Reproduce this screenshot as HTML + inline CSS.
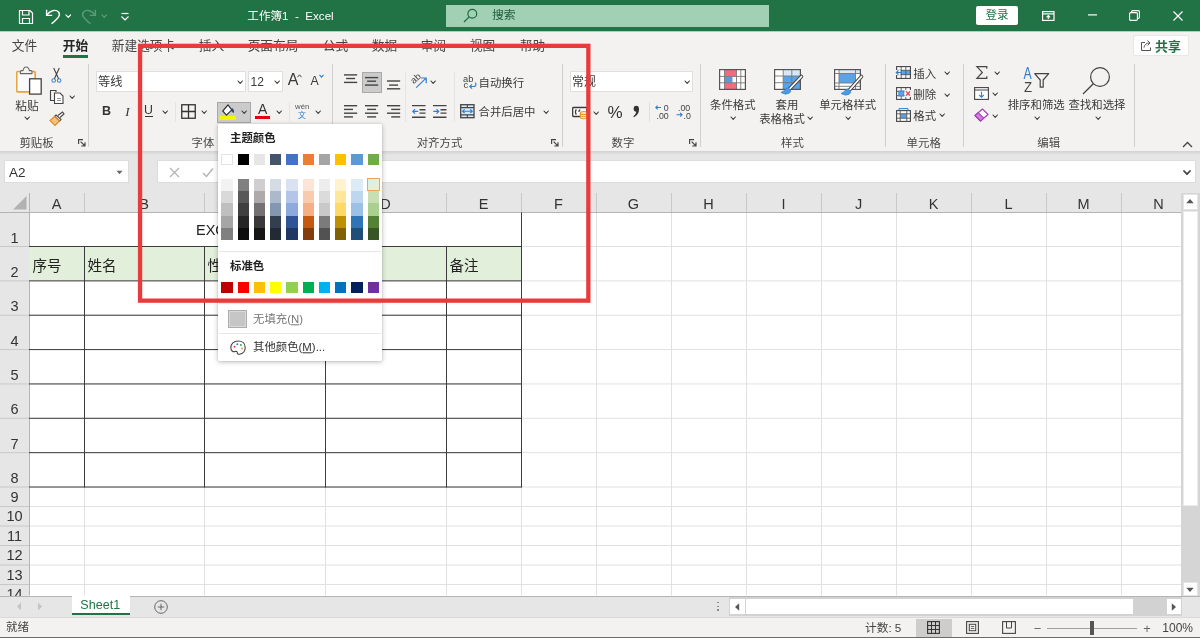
<!DOCTYPE html>
<html lang="zh-CN"><head><meta charset="utf-8"><title>Excel</title>
<style>
html,body{margin:0;padding:0;}
body{width:1200px;height:638px;overflow:hidden;background:#fff;font-family:"Liberation Sans","Noto Sans CJK SC",sans-serif;}
#root{position:relative;width:1200px;height:638px;overflow:hidden;background:#fff;will-change:transform;}
.a{position:absolute;box-sizing:border-box;}
.t{white-space:nowrap;line-height:1;}
svg{overflow:visible;}
</style></head><body><div id="root">
<div class="a " style="left:0px;top:0px;width:1200px;height:32px;background:#b4ccbe;"></div>
<div class="a " style="left:0px;top:0px;width:1200px;height:31px;background:#217346;"></div>
<svg class="a" style="left:18px;top:9px;" width="16" height="16" viewBox="0 0 16 16"><path d="M1.5 1.5 H12 L14.5 4 V14.5 H1.5 Z" fill="none" stroke="#fff" stroke-width="1.2"/><path d="M4.5 1.5 V6 H11 V1.5 M4.5 14.5 V9.5 H11.5 V14.5" fill="none" stroke="#fff" stroke-width="1.2"/></svg>
<svg class="a" style="left:45px;top:8px;" width="16" height="16" viewBox="0 0 16 16"><path d="M1.6 1.8 V7.4 H7.2" fill="none" stroke="#fff" stroke-width="1.4"/><path d="M1.8 7.2 C4.5 2.8 10.500 0.800 13.500 4 C16 7 13.500 10 6.500 15.800" fill="none" stroke="#fff" stroke-width="1.4"/></svg>
<svg class="a" style="left:65.25px;top:13.85px;" width="6.5" height="4.3" viewBox="0 0 6.5 4.3"><path d="M1 1 L3.25 3.3 L5.5 1" fill="none" stroke="#fff" stroke-width="1.2" stroke-linecap="round" stroke-linejoin="round"/></svg>
<svg class="a" style="left:81px;top:8px;" width="16" height="16" viewBox="0 0 16 16"><path d="M14.400 1.8 V7.4 H8.800" fill="none" stroke="#5d9a7a" stroke-width="1.4"/><path d="M14.200 7.2 C11.500 2.8 5.500 0.800 2.500 4 C0 7 2.500 10 9.500 15.800" fill="none" stroke="#5d9a7a" stroke-width="1.4"/></svg>
<svg class="a" style="left:100.75px;top:13.85px;" width="6.5" height="4.3" viewBox="0 0 6.5 4.3"><path d="M1 1 L3.25 3.3 L5.5 1" fill="none" stroke="#5d9a7a" stroke-width="1.2" stroke-linecap="round" stroke-linejoin="round"/></svg>
<svg class="a" style="left:119.5px;top:11.5px;" width="10" height="10" viewBox="0 0 10 10"><path d="M1.5 1.5 H8.5" stroke="#fff" stroke-width="1.2"/><path d="M1.5 4.5 L5 8 L8.5 4.5" fill="none" stroke="#fff" stroke-width="1.2"/></svg>
<div class="a t " style="left:290.5px;top:15.5px;font-size:11.6px;color:#fff;font-weight:400;transform:translate(-50%,-50%);">工作簿1&nbsp; -&nbsp; Excel</div>
<div class="a " style="left:446px;top:4.5px;width:323px;height:22px;background:#a1d0b5;"></div>
<svg class="a" style="left:463px;top:8px;" width="15" height="15" viewBox="0 0 15 15"><circle cx="9.3" cy="5.7" r="4.4" fill="none" stroke="#1e6b41" stroke-width="1.2"/><path d="M6.2 8.8 L1 14" stroke="#1e6b41" stroke-width="1.2"/></svg>
<div class="a t " style="left:492px;top:15.5px;font-size:11.8px;color:#1e5c3a;font-weight:400;transform:translate(0,-50%);">搜索</div>
<div class="a " style="left:976px;top:6px;width:42px;height:19px;background:#fff;border-radius:2px;"></div>
<div class="a t " style="left:997px;top:15.6px;font-size:11.5px;color:#217346;font-weight:400;transform:translate(-50%,-50%);">登录</div>
<svg class="a" style="left:1042px;top:10.8px;" width="12.6" height="10" viewBox="0 0 12.6 10"><rect x="0.6" y="0.6" width="11.4" height="8.8" fill="none" stroke="#fff" stroke-width="1.2"/><path d="M0.6 2.9 H12" stroke="#fff" stroke-width="1.2"/><path d="M6.3 8 V4.6 M4.500 6.300 L6.3 4.500 L8.100 6.300" fill="none" stroke="#fff" stroke-width="1.1"/></svg>
<svg class="a" style="left:1088px;top:12px;" width="9" height="6" viewBox="0 0 9 6"><path d="M0 2.900 H9" stroke="#fff" stroke-width="1.2"/></svg>
<svg class="a" style="left:1129px;top:10px;" width="11" height="11" viewBox="0 0 11 11"><rect x="0.6" y="2.6" width="7.8" height="7.8" rx="1.2" fill="none" stroke="#fff" stroke-width="1.1"/><path d="M2.6 2.4 V1.8 Q2.6 0.6 3.8 0.6 H9.2 Q10.4 0.6 10.4 1.8 V7.2 Q10.4 8.4 9.2 8.4 H8.6" fill="none" stroke="#fff" stroke-width="1.1"/></svg>
<svg class="a" style="left:1173px;top:10.8px;" width="10" height="10" viewBox="0 0 10 10"><path d="M0.5 0.5 L9.5 9.5 M9.5 0.5 L0.5 9.5" stroke="#fff" stroke-width="1.2"/></svg>
<div class="a " style="left:0px;top:32px;width:1200px;height:120px;background:#f3f2f1;"></div>
<div class="a t " style="left:24.5px;top:45.5px;font-size:12.7px;color:#444;font-weight:400;transform:translate(-50%,-50%);">文件</div>
<div class="a t " style="left:75.5px;top:45.5px;font-size:12.7px;color:#262626;font-weight:700;transform:translate(-50%,-50%);">开始</div>
<div class="a t " style="left:143.5px;top:45.5px;font-size:12.7px;color:#444;font-weight:400;transform:translate(-50%,-50%);">新建选项卡</div>
<div class="a t " style="left:211.5px;top:45.5px;font-size:12.7px;color:#444;font-weight:400;transform:translate(-50%,-50%);">插入</div>
<div class="a t " style="left:273px;top:45.5px;font-size:12.7px;color:#444;font-weight:400;transform:translate(-50%,-50%);">页面布局</div>
<div class="a t " style="left:335.5px;top:45.5px;font-size:12.7px;color:#444;font-weight:400;transform:translate(-50%,-50%);">公式</div>
<div class="a t " style="left:384.5px;top:45.5px;font-size:12.7px;color:#444;font-weight:400;transform:translate(-50%,-50%);">数据</div>
<div class="a t " style="left:433.5px;top:45.5px;font-size:12.7px;color:#444;font-weight:400;transform:translate(-50%,-50%);">审阅</div>
<div class="a t " style="left:482.5px;top:45.5px;font-size:12.7px;color:#444;font-weight:400;transform:translate(-50%,-50%);">视图</div>
<div class="a t " style="left:532.5px;top:45.5px;font-size:12.7px;color:#444;font-weight:400;transform:translate(-50%,-50%);">帮助</div>
<div class="a " style="left:63px;top:55px;width:25px;height:2.5px;background:#217346;"></div>
<div class="a " style="left:1133px;top:35px;width:56px;height:21px;background:#fdfdfd;border:1px solid #e9e7e5;border-radius:2px;"></div>
<svg class="a" style="left:1140px;top:39px;" width="13" height="13" viewBox="0 0 13 13"><path d="M5 3.5 H1.5 V11.5 H10.5 V8.5" fill="none" stroke="#555" stroke-width="1"/><path d="M4 8.5 C4.5 5.5 6.5 4 9.5 4 M7.5 1.5 L10 4 L7.5 6.5" fill="none" stroke="#555" stroke-width="1"/></svg>
<div class="a t " style="left:1155px;top:46px;font-size:13px;color:#217346;font-weight:700;transform:translate(0,-50%);">共享</div>
<svg class="a" style="left:15px;top:66px;" width="29" height="30" viewBox="0 0 29 30">
<path d="M5.500 5.600 H2.900 Q1.900 5.600 1.900 6.600 V24.900 Q1.900 25.900 2.900 25.900 H14" fill="#fbfbfd" stroke="#e8a33d" stroke-width="1.700"/>
<path d="M2.700 6.400 H19.400 V12.500 H14 V25.100 H2.700 Z" fill="#fbfbfd"/>
<path d="M17 5.600 H19.200 Q20.200 5.600 20.200 6.600 V12.200" fill="none" stroke="#e8a33d" stroke-width="1.700"/>
<path d="M5.400 7.600 V5.600 Q5.400 4.600 6.400 4.600 H8 Q8.800 1 11.200 1 Q13.600 1 14.400 4.600 H16 Q17 4.600 17 5.600 V7.600 Z" fill="#f3f2f1" stroke="#666" stroke-width="1.100" stroke-linejoin="round"/>
<rect x="14.600" y="12.800" width="11.600" height="15.300" fill="#fff" stroke="#444" stroke-width="1.300"/>
</svg>
<div class="a t " style="left:27px;top:105.8px;font-size:11.7px;color:#3a3a3a;font-weight:400;transform:translate(-50%,-50%);">粘贴</div>
<svg class="a" style="left:23.8px;top:116.3px;" width="6.4" height="4.4" viewBox="0 0 6.4 4.4"><path d="M1 1 L3.2 3.4 L5.4 1" fill="none" stroke="#3a3a3a" stroke-width="1.1" stroke-linecap="round" stroke-linejoin="round"/></svg>
<svg class="a" style="left:50px;top:66.5px;" width="13" height="17" viewBox="0 0 13 17">
<path d="M3.700 1 L8.700 11.900 M9.300 1 L4.300 11.900" stroke="#444" stroke-width="1.100" fill="none"/>
<circle cx="3.700" cy="13.500" r="1.800" fill="none" stroke="#3f87c9" stroke-width="1.100"/>
<circle cx="9.100" cy="13.500" r="1.800" fill="none" stroke="#3f87c9" stroke-width="1.100"/></svg>
<svg class="a" style="left:49px;top:89px;" width="16" height="16" viewBox="0 0 16 16">
<path d="M5 11.500 H1.5 V1.5 H7 V3" fill="none" stroke="#444" stroke-width="1.1"/>
<path d="M5.5 4 H11 L14 7 V14.5 H5.5 Z" fill="#fff" stroke="#444" stroke-width="1.1"/>
<path d="M8 9.5 H12 M8 11.500 H12" stroke="#888" stroke-width="0.9"/></svg>
<svg class="a" style="left:69.3px;top:94.8px;" width="6.4" height="4.4" viewBox="0 0 6.4 4.4"><path d="M1 1 L3.2 3.4 L5.4 1" fill="none" stroke="#3a3a3a" stroke-width="1.1" stroke-linecap="round" stroke-linejoin="round"/></svg>
<svg class="a" style="left:49px;top:111px;" width="16" height="16" viewBox="0 0 16 16">
<path d="M9 4.5 L13.500 1 L15 3 L11 6.5" fill="#fff" stroke="#444" stroke-width="1.1"/>
<path d="M7 4 L12 8.5 L10.5 10 L5.5 5.500 Z" fill="#fff" stroke="#444" stroke-width="1.1"/>
<path d="M5.500 5.500 L1 9.5 L6 14.5 L10.5 10 Z" fill="#f4c27a" stroke="#e08a2c" stroke-width="1.1"/></svg>
<div class="a t " style="left:36.5px;top:143.8px;font-size:11.41px;color:#484848;font-weight:400;transform:translate(-50%,-50%);">剪贴板</div>
<svg class="a" style="left:77.5px;top:138.9px;" width="8" height="8" viewBox="0 0 8 8"><path d="M0.6 5 V0.6 H5" fill="none" stroke="#444" stroke-width="1.15"/><path d="M2.600 2.600 L7 7 M7 3.300 V7 H3.300" fill="none" stroke="#444" stroke-width="1.15"/></svg>
<div class="a " style="left:88px;top:64px;width:1px;height:83px;background:#d2d0ce;"></div>
<div class="a " style="left:96px;top:71px;width:150px;height:21px;background:#fff;border:1px solid #e1dfdd;"></div>
<div class="a t " style="left:98px;top:82.3px;font-size:12.3px;color:#3a3a3a;font-weight:400;transform:translate(0,-50%);">等线</div>
<svg class="a" style="left:237.3px;top:79.8px;" width="6.4" height="4.4" viewBox="0 0 6.4 4.4"><path d="M1 1 L3.2 3.4 L5.4 1" fill="none" stroke="#3a3a3a" stroke-width="1.1" stroke-linecap="round" stroke-linejoin="round"/></svg>
<div class="a " style="left:248px;top:71px;width:35px;height:21px;background:#fff;border:1px solid #e1dfdd;"></div>
<div class="a t " style="left:250.5px;top:82px;font-size:12px;color:#3a3a3a;font-weight:400;transform:translate(0,-50%);">12</div>
<svg class="a" style="left:274.3px;top:79.8px;" width="6.4" height="4.4" viewBox="0 0 6.4 4.4"><path d="M1 1 L3.2 3.4 L5.4 1" fill="none" stroke="#3a3a3a" stroke-width="1.1" stroke-linecap="round" stroke-linejoin="round"/></svg>
<div class="a t " style="left:293.1px;top:80px;font-size:16px;color:#3a3a3a;font-weight:400;transform:translate(-50%,-50%);">A</div>
<svg class="a" style="left:297px;top:74px;" width="5" height="4" viewBox="0 0 5 4"><path d="M0.500 3.200 L2.5 0.800 L4.5 3.200" fill="none" stroke="#444" stroke-width="1"/></svg>
<div class="a t " style="left:314.7px;top:81.4px;font-size:12.3px;color:#3a3a3a;font-weight:400;transform:translate(-50%,-50%);">A</div>
<svg class="a" style="left:318.5px;top:74.3px;" width="5" height="4" viewBox="0 0 5 4"><path d="M0.500 0.800 L2.5 3.200 L4.5 0.800" fill="none" stroke="#2f7fd1" stroke-width="1.1"/></svg>
<div class="a t " style="left:106.4px;top:110.6px;font-size:12.5px;color:#333;font-weight:700;transform:translate(-50%,-50%);">B</div>
<div class="a t " style="left:127.5px;top:110.6px;font-size:13px;color:#333;font-weight:400;transform:translate(-50%,-50%);font-style:italic;font-family:&quot;Liberation Serif&quot;,serif;">I</div>
<div class="a t " style="left:148.4px;top:110.4px;font-size:12.3px;color:#333;font-weight:400;transform:translate(-50%,-50%);">U</div>
<div class="a " style="left:144.5px;top:116px;width:8px;height:1px;background:#333;"></div>
<svg class="a" style="left:161.8px;top:110.1px;" width="6.4" height="4.4" viewBox="0 0 6.4 4.4"><path d="M1 1 L3.2 3.4 L5.4 1" fill="none" stroke="#3a3a3a" stroke-width="1.1" stroke-linecap="round" stroke-linejoin="round"/></svg>
<div class="a " style="left:174.5px;top:102px;width:1px;height:20px;background:#e6e4e2;"></div>
<svg class="a" style="left:180.5px;top:103.7px;" width="15" height="15" viewBox="0 0 15 15"><rect x="0.750" y="0.750" width="13.500" height="13.500" fill="none" stroke="#333" stroke-width="1.3"/><path d="M7.5 0.750 V14.250 M0.750 7.5 H14.250" stroke="#333" stroke-width="1.3"/></svg>
<svg class="a" style="left:201.3px;top:110.1px;" width="6.4" height="4.4" viewBox="0 0 6.4 4.4"><path d="M1 1 L3.2 3.4 L5.4 1" fill="none" stroke="#3a3a3a" stroke-width="1.1" stroke-linecap="round" stroke-linejoin="round"/></svg>
<div class="a " style="left:217px;top:102px;width:34px;height:21px;background:#cbcbcb;border:1px solid #a9a9a9;"></div>
<svg class="a" style="left:220px;top:102.5px;" width="16" height="13" viewBox="0 0 16 13">
<path d="M8 1.800 L11.800 6.800 L6.500 12.200 L2.800 8 Z" fill="#fff" stroke="#333" stroke-width="1.200" stroke-linejoin="round"/>
<path d="M12.300 5.500 Q14 7.500 13.600 9.200 Q12.800 9.800 12.200 8.600 Z" fill="#1f3864" stroke="#1f3864" stroke-width="0.800" stroke-linejoin="round"/></svg>
<div class="a " style="left:219px;top:116px;width:17px;height:3.5px;background:#f5f500;"></div>
<svg class="a" style="left:240.8px;top:110.39999999999999px;" width="6.4" height="4.4" viewBox="0 0 6.4 4.4"><path d="M1 1 L3.2 3.4 L5.4 1" fill="none" stroke="#3a3a3a" stroke-width="1.1" stroke-linecap="round" stroke-linejoin="round"/></svg>
<div class="a t " style="left:262.7px;top:109.2px;font-size:14px;color:#333;font-weight:400;transform:translate(-50%,-50%);">A</div>
<div class="a " style="left:255px;top:116px;width:15px;height:3.3px;background:#e60012;"></div>
<svg class="a" style="left:275.8px;top:110.3px;" width="6.4" height="4.4" viewBox="0 0 6.4 4.4"><path d="M1 1 L3.2 3.4 L5.4 1" fill="none" stroke="#3a3a3a" stroke-width="1.1" stroke-linecap="round" stroke-linejoin="round"/></svg>
<div class="a " style="left:289px;top:102px;width:1px;height:20px;background:#e6e4e2;"></div>
<div class="a t " style="left:302.2px;top:107.1px;font-size:7.8px;color:#555;font-weight:400;transform:translate(-50%,-50%);">wén</div>
<div class="a t " style="left:302px;top:115.8px;font-size:8px;color:#2f7fd1;font-weight:400;transform:translate(-50%,-50%);">文</div>
<svg class="a" style="left:315.0px;top:110.3px;" width="6.4" height="4.4" viewBox="0 0 6.4 4.4"><path d="M1 1 L3.2 3.4 L5.4 1" fill="none" stroke="#3a3a3a" stroke-width="1.1" stroke-linecap="round" stroke-linejoin="round"/></svg>
<div class="a t " style="left:203px;top:143.8px;font-size:11.41px;color:#484848;font-weight:400;transform:translate(-50%,-50%);">字体</div>
<div class="a " style="left:332px;top:64px;width:1px;height:83px;background:#d2d0ce;"></div>
<svg class="a" style="left:344px;top:72px;" width="13.2" height="20" viewBox="0 0 13.2 20"><path d="M0.0 2.9 H13.2" stroke="#444" stroke-width="1.4"/><path d="M2.0999999999999996 6.5 H11.1" stroke="#444" stroke-width="1.4"/><path d="M0.0 10.4 H13.2" stroke="#444" stroke-width="1.4"/></svg>
<div class="a " style="left:362px;top:72px;width:20px;height:21px;background:#cbcbcb;border:1px solid #a9a9a9;"></div>
<svg class="a" style="left:365.1px;top:72px;" width="13.2" height="20" viewBox="0 0 13.2 20"><path d="M0.0 5.6 H13.2" stroke="#444" stroke-width="1.4"/><path d="M2.0999999999999996 9.2 H11.1" stroke="#444" stroke-width="1.4"/><path d="M0.0 13.1 H13.2" stroke="#444" stroke-width="1.4"/></svg>
<svg class="a" style="left:386.8px;top:72px;" width="13.2" height="20" viewBox="0 0 13.2 20"><path d="M0.0 9 H13.2" stroke="#444" stroke-width="1.4"/><path d="M2.0999999999999996 13.1 H11.1" stroke="#444" stroke-width="1.4"/><path d="M0.0 16.8 H13.2" stroke="#444" stroke-width="1.4"/></svg>
<div class="a " style="left:404.5px;top:72px;width:1px;height:50px;background:#e6e4e2;"></div>
<svg class="a" style="left:410px;top:72px;" width="18" height="18" viewBox="0 0 18 18">
<text x="0" y="0" font-size="9.500" fill="#444" transform="translate(3.800 12.300) rotate(-42)" font-family="Liberation Sans">ab</text>
<path d="M6.200 15.600 L15.800 6.400 M11 6 H16.200 V11.200" fill="none" stroke="#2f7fd1" stroke-width="1.200"/></svg>
<svg class="a" style="left:429.5px;top:80.2px;" width="6.4" height="4.4" viewBox="0 0 6.4 4.4"><path d="M1 1 L3.2 3.4 L5.4 1" fill="none" stroke="#3a3a3a" stroke-width="1.1" stroke-linecap="round" stroke-linejoin="round"/></svg>
<div class="a " style="left:453.5px;top:72px;width:1px;height:50px;background:#e6e4e2;"></div>
<svg class="a" style="left:463px;top:75px;" width="14" height="14" viewBox="0 0 14 14">
<text x="0" y="6.500" font-size="9.300" fill="#444" font-family="Liberation Sans">ab</text>
<text x="0.500" y="13" font-size="9.300" fill="#444" font-family="Liberation Sans">c</text>
<path d="M12.200 7.600 Q13.600 9 12.600 10.600 Q12 11.500 10.500 11.500 H7 M9 9.300 L6.800 11.500 L9 13.700" fill="none" stroke="#2f7fd1" stroke-width="1.200"/></svg>
<div class="a t " style="left:478.5px;top:83.8px;font-size:11.41px;color:#3a3a3a;font-weight:400;transform:translate(0,-50%);">自动换行</div>
<svg class="a" style="left:344px;top:103px;" width="13.2" height="16" viewBox="0 0 13.2 16"><path d="M0 2.7 H13.2" stroke="#444" stroke-width="1.4"/><path d="M0 6.4 H9" stroke="#444" stroke-width="1.4"/><path d="M0 10.2 H13.2" stroke="#444" stroke-width="1.4"/><path d="M0 13.9 H9" stroke="#444" stroke-width="1.4"/></svg>
<svg class="a" style="left:365.1px;top:103px;" width="13.2" height="16" viewBox="0 0 13.2 16"><path d="M0.0 2.7 H13.2" stroke="#444" stroke-width="1.4"/><path d="M2.0999999999999996 6.4 H11.1" stroke="#444" stroke-width="1.4"/><path d="M0.0 10.2 H13.2" stroke="#444" stroke-width="1.4"/><path d="M2.0999999999999996 13.9 H11.1" stroke="#444" stroke-width="1.4"/></svg>
<svg class="a" style="left:386.8px;top:103px;" width="13.2" height="16" viewBox="0 0 13.2 16"><path d="M0.0 2.7 H13.2" stroke="#444" stroke-width="1.4"/><path d="M4.199999999999999 6.4 H13.2" stroke="#444" stroke-width="1.4"/><path d="M0.0 10.2 H13.2" stroke="#444" stroke-width="1.4"/><path d="M4.199999999999999 13.9 H13.2" stroke="#444" stroke-width="1.4"/></svg>
<svg class="a" style="left:412px;top:103px;" width="14" height="16" viewBox="0 0 14 16">
<path d="M0 2.6 H13.5 M7.5 6.700 H13.5 M7.5 10.100 H13.5 M0 14.200 H13.5" stroke="#444" stroke-width="1.400"/>
<path d="M6.200 8.400 H0.800 M3 6.200 L0.800 8.400 L3 10.600" fill="none" stroke="#2f7fd1" stroke-width="1.200"/></svg>
<svg class="a" style="left:433.3px;top:103px;" width="14" height="16" viewBox="0 0 14 16">
<path d="M0 2.6 H13.5 M7.5 6.700 H13.5 M7.5 10.100 H13.5 M0 14.200 H13.5" stroke="#444" stroke-width="1.400"/>
<path d="M0.300 8.400 H5.700 M3.500 6.200 L5.700 8.400 L3.500 10.600" fill="none" stroke="#2f7fd1" stroke-width="1.200"/></svg>
<svg class="a" style="left:460.4px;top:104px;" width="15" height="15" viewBox="0 0 15 15">
<rect x="0.700" y="0.700" width="13.300" height="13" fill="#dbeaf8" stroke="#444" stroke-width="1.300"/>
<path d="M0.700 3.600 H14 M0.700 10.900 H14 M7.300 0.700 V3.600 M7.300 10.900 V13.700" stroke="#444" stroke-width="1.100"/>
<path d="M2.600 7.250 H12.200 M4.600 5.400 L2.600 7.250 L4.600 9.100 M10.200 5.400 L12.200 7.250 L10.200 9.100" fill="none" stroke="#2f7fd1" stroke-width="1.200"/></svg>
<div class="a t " style="left:478.5px;top:113.3px;font-size:11.41px;color:#3a3a3a;font-weight:400;transform:translate(0,-50%);">合并后居中</div>
<svg class="a" style="left:543.3px;top:110.3px;" width="6.4" height="4.4" viewBox="0 0 6.4 4.4"><path d="M1 1 L3.2 3.4 L5.4 1" fill="none" stroke="#3a3a3a" stroke-width="1.1" stroke-linecap="round" stroke-linejoin="round"/></svg>
<div class="a t " style="left:439.5px;top:143.8px;font-size:11.41px;color:#484848;font-weight:400;transform:translate(-50%,-50%);">对齐方式</div>
<svg class="a" style="left:551px;top:138.9px;" width="8" height="8" viewBox="0 0 8 8"><path d="M0.6 5 V0.6 H5" fill="none" stroke="#444" stroke-width="1.15"/><path d="M2.600 2.600 L7 7 M7 3.300 V7 H3.300" fill="none" stroke="#444" stroke-width="1.15"/></svg>
<div class="a " style="left:562px;top:64px;width:1px;height:83px;background:#d2d0ce;"></div>
<div class="a " style="left:570px;top:71px;width:123px;height:21px;background:#fff;border:1px solid #e1dfdd;"></div>
<div class="a t " style="left:572px;top:82.3px;font-size:12px;color:#3a3a3a;font-weight:400;transform:translate(0,-50%);">常规</div>
<svg class="a" style="left:684.3px;top:79.8px;" width="6.4" height="4.4" viewBox="0 0 6.4 4.4"><path d="M1 1 L3.2 3.4 L5.4 1" fill="none" stroke="#3a3a3a" stroke-width="1.1" stroke-linecap="round" stroke-linejoin="round"/></svg>
<svg class="a" style="left:572px;top:104px;" width="17" height="15" viewBox="0 0 17 15">
<rect x="0.700" y="3.500" width="14" height="9" rx="0.800" fill="#fff" stroke="#3a3a3a" stroke-width="1.300"/>
<path d="M4.300 5.300 Q2.500 8 4.300 10.700 M8.300 5.600 Q6.800 6.300 6.900 8" fill="none" stroke="#3a3a3a" stroke-width="1.200"/>
<path d="M8.300 9 V13.300 Q8.300 14.700 11.800 14.700 Q15.300 14.700 15.300 13.300 V9" fill="#fde8b8" stroke="#e39a2d" stroke-width="1.100"/>
<ellipse cx="11.800" cy="9" rx="3.500" ry="1.500" fill="#fde8b8" stroke="#e39a2d" stroke-width="1.100"/>
<path d="M8.300 11.200 Q8.300 12.600 11.800 12.600 Q15.300 12.600 15.300 11.200" fill="none" stroke="#e39a2d" stroke-width="0.900"/></svg>
<svg class="a" style="left:593.0999999999999px;top:110.7px;" width="6.4" height="4.4" viewBox="0 0 6.4 4.4"><path d="M1 1 L3.2 3.4 L5.4 1" fill="none" stroke="#3a3a3a" stroke-width="1.1" stroke-linecap="round" stroke-linejoin="round"/></svg>
<div class="a t " style="left:615px;top:111.5px;font-size:17px;color:#333;font-weight:400;transform:translate(-50%,-50%);">%</div>
<div class="a t " style="left:636.5px;top:107px;font-size:1px;color:#333;font-weight:400;transform:translate(-50%,-50%);display:none;">❟</div>
<svg class="a" style="left:631px;top:103.5px;" width="9" height="14" viewBox="0 0 9 14"><path transform="scale(1.15)" d="M4.500 1.500 Q7 1.500 7 4.500 Q7 9 2.500 11.500 L2 10.800 Q4.500 9 4.600 6.800 Q2.300 6.800 2.300 4.200 Q2.300 1.500 4.500 1.500 Z" fill="#333"/></svg>
<div class="a " style="left:648.5px;top:102px;width:1px;height:20px;background:#e1dfdd;"></div>
<svg class="a" style="left:654.5px;top:103.5px;" width="15" height="15" viewBox="0 0 15 15">
<path d="M6 3.500 H0.800 M2.600 1.700 L0.800 3.500 L2.600 5.300" fill="none" stroke="#2f7fd1" stroke-width="1.1"/>
<text x="8.800" y="7" font-size="8.800" fill="#444" font-family="Liberation Sans">0</text>
<text x="1.500" y="14.800" font-size="8.800" fill="#444" font-family="Liberation Sans">.00</text></svg>
<svg class="a" style="left:676px;top:103.5px;" width="15" height="15" viewBox="0 0 15 15">
<text x="2" y="7" font-size="8.800" fill="#444" font-family="Liberation Sans">.00</text>
<path d="M0.500 10.800 H6 M4.200 9 L6 10.800 L4.200 12.600" fill="none" stroke="#2f7fd1" stroke-width="1.1"/>
<text x="7.500" y="14.800" font-size="8.800" fill="#444" font-family="Liberation Sans">.0</text></svg>
<div class="a t " style="left:623px;top:143.8px;font-size:11.41px;color:#484848;font-weight:400;transform:translate(-50%,-50%);">数字</div>
<svg class="a" style="left:689px;top:138.9px;" width="8" height="8" viewBox="0 0 8 8"><path d="M0.6 5 V0.6 H5" fill="none" stroke="#444" stroke-width="1.15"/><path d="M2.600 2.600 L7 7 M7 3.300 V7 H3.300" fill="none" stroke="#444" stroke-width="1.15"/></svg>
<div class="a " style="left:700px;top:64px;width:1px;height:83px;background:#d2d0ce;"></div>
<svg class="a" style="left:719px;top:69px;" width="27" height="21" viewBox="0 0 27 21">
<rect x="0.600" y="0.600" width="25.800" height="19.800" fill="#fff"/>
<rect x="5.500" y="0.600" width="11.500" height="6.800" fill="#f26b7f"/>
<rect x="5.500" y="7.400" width="8" height="6.400" fill="#5b9bd5"/>
<rect x="5.500" y="13.800" width="12.500" height="6.600" fill="#f26b7f"/>
<path d="M5.500 0.600 V20.400 M17.500 0.600 V20.400 M21.800 0.600 V20.400 M0.600 7.400 H26.400 M0.600 13.800 H26.400" stroke="#777" stroke-width="0.900" fill="none"/>
<path d="M13.500 7.400 H17.500 V13.800" stroke="#fff" stroke-width="0" fill="none"/>
<rect x="0.600" y="0.600" width="25.800" height="19.800" fill="none" stroke="#555" stroke-width="1.200"/></svg>
<div class="a t " style="left:732.8px;top:105.8px;font-size:11.41px;color:#3a3a3a;font-weight:400;transform:translate(-50%,-50%);">条件格式</div>
<svg class="a" style="left:729.8px;top:116.3px;" width="6.4" height="4.4" viewBox="0 0 6.4 4.4"><path d="M1 1 L3.2 3.4 L5.4 1" fill="none" stroke="#3a3a3a" stroke-width="1.1" stroke-linecap="round" stroke-linejoin="round"/></svg>
<svg class="a" style="left:774px;top:69px;" width="30" height="26" viewBox="0 0 30 26">
<rect x="0.600" y="0.600" width="25.800" height="19.800" fill="#fff"/>
<rect x="9.200" y="7" width="17.200" height="13.400" fill="#5ba3e6"/>
<rect x="9.200" y="0.600" width="17.200" height="6.400" fill="#d6e8f9"/>
<path d="M9.200 0.600 V20.400 M17.800 0.600 V20.400 M0.600 7 H26.400 M0.600 13.700 H26.400" stroke="#777" stroke-width="0.900" fill="none"/>
<rect x="0.600" y="0.600" width="25.800" height="19.800" fill="none" stroke="#555" stroke-width="1.200"/>
<path d="M27.5 7.5 L15.5 20" stroke="#444" stroke-width="3.600" stroke-linecap="round"/><path d="M27.5 7.5 L15.5 20" stroke="#fff" stroke-width="1.800" stroke-linecap="round"/><path d="M16.0 20.5 q-1.500 -3 -4.500 -0.500 q-1.500 2.500 -4.500 3.500 q5 3 8.500 0.500 q2 -1.500 0.500 -3.500 Z" fill="#4a9be0" stroke="#2f7fd1" stroke-width="0.700"/></svg>
<div class="a t " style="left:787px;top:105.8px;font-size:11.41px;color:#3a3a3a;font-weight:400;transform:translate(-50%,-50%);">套用</div>
<div class="a t " style="left:782px;top:119.8px;font-size:11.41px;color:#3a3a3a;font-weight:400;transform:translate(-50%,-50%);">表格格式</div>
<svg class="a" style="left:807.3px;top:115.8px;" width="6.4" height="4.4" viewBox="0 0 6.4 4.4"><path d="M1 1 L3.2 3.4 L5.4 1" fill="none" stroke="#3a3a3a" stroke-width="1.1" stroke-linecap="round" stroke-linejoin="round"/></svg>
<svg class="a" style="left:834px;top:69px;" width="30" height="26" viewBox="0 0 30 26">
<rect x="0.600" y="0.600" width="25.800" height="19.800" fill="#fff"/>
<rect x="5" y="1" width="21.400" height="3.500" fill="#d6e8f9"/>
<rect x="5" y="4.500" width="16.500" height="9.500" fill="#5ba3e6"/>
<path d="M5 0.600 V20.400 M21.500 0.600 V20.400 M0.600 4.500 H26.400 M0.600 14 H26.400 M0.600 17.300 H26.400" stroke="#777" stroke-width="0.900" fill="none"/>
<rect x="0.600" y="0.600" width="25.800" height="19.800" fill="none" stroke="#555" stroke-width="1.200"/>
<path d="M27.5 7.5 L15.5 21" stroke="#444" stroke-width="3.600" stroke-linecap="round"/><path d="M27.5 7.5 L15.5 21" stroke="#fff" stroke-width="1.800" stroke-linecap="round"/><path d="M16.0 21.5 q-1.500 -3 -4.500 -0.500 q-1.500 2.500 -4.500 3.500 q5 3 8.500 0.500 q2 -1.500 0.500 -3.500 Z" fill="#4a9be0" stroke="#2f7fd1" stroke-width="0.700"/></svg>
<div class="a t " style="left:847.7px;top:105.8px;font-size:11.41px;color:#3a3a3a;font-weight:400;transform:translate(-50%,-50%);">单元格样式</div>
<svg class="a" style="left:845.3px;top:116.3px;" width="6.4" height="4.4" viewBox="0 0 6.4 4.4"><path d="M1 1 L3.2 3.4 L5.4 1" fill="none" stroke="#3a3a3a" stroke-width="1.1" stroke-linecap="round" stroke-linejoin="round"/></svg>
<div class="a t " style="left:792.5px;top:143.8px;font-size:11.41px;color:#484848;font-weight:400;transform:translate(-50%,-50%);">样式</div>
<div class="a " style="left:885px;top:64px;width:1px;height:83px;background:#d2d0ce;"></div>
<svg class="a" style="left:896px;top:66px;" width="15" height="13" viewBox="0 0 15 13">
<rect x="0.600" y="0.600" width="13.800" height="11.800" fill="#fff"/>
<rect x="0.600" y="4.300" width="13.800" height="4.400" fill="#5ba3e6"/>
<path d="M5.200 0.600 V12.400 M9.800 0.600 V12.400 M0.600 4.300 H14.400 M0.600 8.700 H14.400" stroke="#555" stroke-width="0.900"/>
<rect x="0.600" y="0.600" width="13.800" height="11.800" fill="none" stroke="#444" stroke-width="1.100"/>
<rect x="-0.500" y="4" width="5" height="5" fill="#f3f2f1"/>
<path d="M6 6.500 H0.300 M2.500 4.300 L0.300 6.500 L2.500 8.700" fill="none" stroke="#2f7fd1" stroke-width="1.200"/></svg>
<div class="a t " style="left:913.3px;top:74.6px;font-size:11.41px;color:#3a3a3a;font-weight:400;transform:translate(0,-50%);">插入</div>
<svg class="a" style="left:944.3px;top:71.3px;" width="6.4" height="4.4" viewBox="0 0 6.4 4.4"><path d="M1 1 L3.2 3.4 L5.4 1" fill="none" stroke="#3a3a3a" stroke-width="1.1" stroke-linecap="round" stroke-linejoin="round"/></svg>
<svg class="a" style="left:896px;top:87.3px;" width="15" height="13" viewBox="0 0 15 13">
<rect x="0.600" y="0.600" width="13.800" height="11.800" fill="#fff"/>
<path d="M5.200 0.600 V12.400 M9.800 0.600 V12.400 M0.600 4.300 H14.400 M0.600 8.700 H14.400" stroke="#555" stroke-width="0.900"/>
<rect x="0.600" y="0.600" width="13.800" height="11.800" fill="none" stroke="#444" stroke-width="1.100"/>
<rect x="8.500" y="3" width="7" height="7" fill="#f3f2f1"/>
<rect x="2.800" y="4" width="5" height="5" fill="#5ba3e6" stroke="#2f7fd1" stroke-width="0.800"/>
<path d="M10 4.300 L14 8.700 M14 4.300 L10 8.700" stroke="#e8394a" stroke-width="1.200"/></svg>
<div class="a t " style="left:913.3px;top:95.8px;font-size:11.41px;color:#3a3a3a;font-weight:400;transform:translate(0,-50%);">删除</div>
<svg class="a" style="left:944.3px;top:92.6px;" width="6.4" height="4.4" viewBox="0 0 6.4 4.4"><path d="M1 1 L3.2 3.4 L5.4 1" fill="none" stroke="#3a3a3a" stroke-width="1.1" stroke-linecap="round" stroke-linejoin="round"/></svg>
<svg class="a" style="left:896px;top:108.3px;" width="15" height="14" viewBox="0 0 15 14">
<rect x="0.600" y="2.600" width="13.800" height="10.800" fill="#fff"/>
<rect x="4.200" y="5.800" width="6.600" height="4.400" fill="#5ba3e6"/>
<path d="M4.200 2.600 V13.400 M10.800 2.600 V13.400 M0.600 5.800 H14.400 M0.600 10.200 H14.400" stroke="#555" stroke-width="0.900"/>
<rect x="0.600" y="2.600" width="13.800" height="10.800" fill="none" stroke="#444" stroke-width="1.100"/>
<path d="M3 2.600 V0.600 H12 V2.600" fill="none" stroke="#2f7fd1" stroke-width="1"/></svg>
<div class="a t " style="left:913.3px;top:116.6px;font-size:11.41px;color:#3a3a3a;font-weight:400;transform:translate(0,-50%);">格式</div>
<svg class="a" style="left:938.8px;top:113.3px;" width="6.4" height="4.4" viewBox="0 0 6.4 4.4"><path d="M1 1 L3.2 3.4 L5.4 1" fill="none" stroke="#3a3a3a" stroke-width="1.1" stroke-linecap="round" stroke-linejoin="round"/></svg>
<div class="a t " style="left:923.7px;top:143.8px;font-size:11.41px;color:#484848;font-weight:400;transform:translate(-50%,-50%);">单元格</div>
<div class="a " style="left:963px;top:64px;width:1px;height:83px;background:#d2d0ce;"></div>
<svg class="a" style="left:975.5px;top:66px;" width="12" height="13" viewBox="0 0 12 13"><path d="M10.800 2.800 V0.700 H0.900 L6.300 6.400 L0.900 12.300 H10.800 V10.200" fill="none" stroke="#444" stroke-width="1.200"/></svg>
<svg class="a" style="left:994.3px;top:71.3px;" width="6.4" height="4.4" viewBox="0 0 6.4 4.4"><path d="M1 1 L3.2 3.4 L5.4 1" fill="none" stroke="#3a3a3a" stroke-width="1.1" stroke-linecap="round" stroke-linejoin="round"/></svg>
<svg class="a" style="left:974px;top:87.3px;" width="15" height="13" viewBox="0 0 15 13">
<rect x="0.600" y="0.600" width="13.800" height="11.800" fill="#fff" stroke="#444" stroke-width="1.100"/>
<path d="M0.600 3 H14.400" stroke="#444" stroke-width="1"/>
<path d="M7.500 4.800 V10.300 M5.200 8 L7.500 10.300 L9.800 8" fill="none" stroke="#2f7fd1" stroke-width="1.100"/></svg>
<svg class="a" style="left:992.0px;top:92.3px;" width="6.4" height="4.4" viewBox="0 0 6.4 4.4"><path d="M1 1 L3.2 3.4 L5.4 1" fill="none" stroke="#3a3a3a" stroke-width="1.1" stroke-linecap="round" stroke-linejoin="round"/></svg>
<svg class="a" style="left:974px;top:107.8px;" width="15" height="14" viewBox="0 0 15 14">
<path d="M8.500 1 L14 6.500 L6.500 13 L1 7.500 Z" fill="#fff" stroke="#a43fb5" stroke-width="1.100" stroke-linejoin="round"/>
<path d="M4.200 4.700 L9.700 10.200 L6.500 13 L1 7.500 Z" fill="#d77be0" stroke="#a43fb5" stroke-width="1.100" stroke-linejoin="round"/></svg>
<svg class="a" style="left:992.0px;top:113.6px;" width="6.4" height="4.4" viewBox="0 0 6.4 4.4"><path d="M1 1 L3.2 3.4 L5.4 1" fill="none" stroke="#3a3a3a" stroke-width="1.1" stroke-linecap="round" stroke-linejoin="round"/></svg>
<svg class="a" style="left:1023px;top:66px;" width="10" height="27" viewBox="0 0 10 27">
<text x="0" y="0" font-size="12.3" fill="#2f7fd1" font-family="Liberation Sans" transform="translate(0.600 12.800) scale(1 1.280)">A</text>
<text x="0" y="0" font-size="12.3" fill="#444" font-family="Liberation Sans" transform="translate(0.900 25.600) scale(1.080 1.220)">Z</text></svg>
<svg class="a" style="left:1034px;top:73px;" width="16" height="16" viewBox="0 0 16 16"><path d="M0.700 0.700 H14.700 L9.200 7 V14.200 H6.200 V7 Z" fill="none" stroke="#444" stroke-width="1.200" stroke-linejoin="round"/></svg>
<div class="a t " style="left:1036.2px;top:105.8px;font-size:11.41px;color:#3a3a3a;font-weight:400;transform:translate(-50%,-50%);">排序和筛选</div>
<svg class="a" style="left:1034.3px;top:116.3px;" width="6.4" height="4.4" viewBox="0 0 6.4 4.4"><path d="M1 1 L3.2 3.4 L5.4 1" fill="none" stroke="#3a3a3a" stroke-width="1.1" stroke-linecap="round" stroke-linejoin="round"/></svg>
<svg class="a" style="left:1082px;top:66px;" width="30" height="30" viewBox="0 0 30 30"><circle cx="18" cy="11" r="9.400" fill="none" stroke="#444" stroke-width="1.200"/><path d="M11.300 17.700 L1 28" stroke="#444" stroke-width="1.300"/></svg>
<div class="a t " style="left:1097px;top:105.8px;font-size:11.41px;color:#3a3a3a;font-weight:400;transform:translate(-50%,-50%);">查找和选择</div>
<svg class="a" style="left:1094.8px;top:116.3px;" width="6.4" height="4.4" viewBox="0 0 6.4 4.4"><path d="M1 1 L3.2 3.4 L5.4 1" fill="none" stroke="#3a3a3a" stroke-width="1.1" stroke-linecap="round" stroke-linejoin="round"/></svg>
<div class="a t " style="left:1048.7px;top:143.8px;font-size:11.41px;color:#484848;font-weight:400;transform:translate(-50%,-50%);">编辑</div>
<div class="a " style="left:1134px;top:64px;width:1px;height:83px;background:#d2d0ce;"></div>
<svg class="a" style="left:1182px;top:141px;" width="11" height="7" viewBox="0 0 11 7"><path d="M1 6 L5.500 1.500 L10 6" fill="none" stroke="#444" stroke-width="1.300"/></svg>
<div class="a " style="left:0px;top:151px;width:1200px;height:61px;background:#e6e6e6;"></div>
<div class="a" style="left:0;top:151px;width:1200px;height:4px;background:linear-gradient(#d2d2d2,#e6e6e6);"></div>
<div class="a " style="left:4px;top:160px;width:124.5px;height:23px;background:#fff;border:1px solid #dcdcdc;"></div>
<div class="a t " style="left:9px;top:172.5px;font-size:13.5px;color:#333;font-weight:400;transform:translate(0,-50%);">A2</div>
<svg class="a" style="left:116px;top:170px;" width="7" height="5" viewBox="0 0 7 5"><path d="M0.500 0.800 H6.500 L3.500 4.200 Z" fill="#666"/></svg>
<div class="a " style="left:140px;top:165.5px;width:1.5px;height:1.5px;background:#999;"></div>
<div class="a " style="left:140px;top:170.5px;width:1.5px;height:1.5px;background:#999;"></div>
<div class="a " style="left:140px;top:175.5px;width:1.5px;height:1.5px;background:#999;"></div>
<div class="a " style="left:157px;top:160px;width:1038.5px;height:23px;background:#fff;border:1px solid #dcdcdc;"></div>
<svg class="a" style="left:168.5px;top:166.5px;" width="11" height="11" viewBox="0 0 11 11"><path d="M1 1 L10 10 M10 1 L1 10" stroke="#b5b5b5" stroke-width="1.300"/></svg>
<svg class="a" style="left:202px;top:166.5px;" width="12" height="11" viewBox="0 0 12 11"><path d="M1 6 L4.500 9.500 L11 1.500" fill="none" stroke="#b5b5b5" stroke-width="1.500"/></svg>
<div class="a t " style="left:241px;top:172.5px;font-size:13px;color:#666;font-weight:400;transform:translate(-50%,-50%);font-style:italic;font-family:&quot;Liberation Serif&quot;,serif;">fx</div>
<svg class="a" style="left:1183.4px;top:169.70000000000002px;" width="8" height="5.2" viewBox="0 0 8 5.2"><path d="M1 1 L4.0 4.2 L7 1" fill="none" stroke="#444" stroke-width="1.8" stroke-linecap="round" stroke-linejoin="round"/></svg>
<div class="a " style="left:0px;top:192px;width:1181px;height:20px;background:#e6e6e6;"></div>
<div class="a " style="left:0px;top:212px;width:29px;height:383.5px;background:#e6e6e6;"></div>
<div class="a " style="left:29px;top:212px;width:1152px;height:383.5px;background:#fff;"></div>
<svg class="a" style="left:0px;top:0px;pointer-events:none;" width="1181" height="595.5" viewBox="0 0 1181 595.5"><path d="M84.5 212 V595.5" stroke="#e1e1e1" stroke-width="1"/><path d="M204.5 212 V595.5" stroke="#e1e1e1" stroke-width="1"/><path d="M325.5 212 V595.5" stroke="#e1e1e1" stroke-width="1"/><path d="M446.5 212 V595.5" stroke="#e1e1e1" stroke-width="1"/><path d="M521.5 212 V595.5" stroke="#e1e1e1" stroke-width="1"/><path d="M596.5 212 V595.5" stroke="#e1e1e1" stroke-width="1"/><path d="M671.5 212 V595.5" stroke="#e1e1e1" stroke-width="1"/><path d="M746.5 212 V595.5" stroke="#e1e1e1" stroke-width="1"/><path d="M821.5 212 V595.5" stroke="#e1e1e1" stroke-width="1"/><path d="M896.5 212 V595.5" stroke="#e1e1e1" stroke-width="1"/><path d="M971.5 212 V595.5" stroke="#e1e1e1" stroke-width="1"/><path d="M1046.5 212 V595.5" stroke="#e1e1e1" stroke-width="1"/><path d="M1121.5 212 V595.5" stroke="#e1e1e1" stroke-width="1"/><path d="M29 246.5 H1181" stroke="#e1e1e1" stroke-width="1"/><path d="M29 280.86 H1181" stroke="#e1e1e1" stroke-width="1"/><path d="M29 315.22 H1181" stroke="#e1e1e1" stroke-width="1"/><path d="M29 349.58 H1181" stroke="#e1e1e1" stroke-width="1"/><path d="M29 383.94 H1181" stroke="#e1e1e1" stroke-width="1"/><path d="M29 418.3 H1181" stroke="#e1e1e1" stroke-width="1"/><path d="M29 452.66 H1181" stroke="#e1e1e1" stroke-width="1"/><path d="M29 487.02 H1181" stroke="#e1e1e1" stroke-width="1"/><path d="M29 506.52 H1181" stroke="#e1e1e1" stroke-width="1"/><path d="M29 526.02 H1181" stroke="#e1e1e1" stroke-width="1"/><path d="M29 545.52 H1181" stroke="#e1e1e1" stroke-width="1"/><path d="M29 565.02 H1181" stroke="#e1e1e1" stroke-width="1"/><path d="M29 584.52 H1181" stroke="#e1e1e1" stroke-width="1"/><path d="M84.5 193 V212" stroke="#c8c8c8" stroke-width="1"/><path d="M204.5 193 V212" stroke="#c8c8c8" stroke-width="1"/><path d="M325.5 193 V212" stroke="#c8c8c8" stroke-width="1"/><path d="M446.5 193 V212" stroke="#c8c8c8" stroke-width="1"/><path d="M521.5 193 V212" stroke="#c8c8c8" stroke-width="1"/><path d="M596.5 193 V212" stroke="#c8c8c8" stroke-width="1"/><path d="M671.5 193 V212" stroke="#c8c8c8" stroke-width="1"/><path d="M746.5 193 V212" stroke="#c8c8c8" stroke-width="1"/><path d="M821.5 193 V212" stroke="#c8c8c8" stroke-width="1"/><path d="M896.5 193 V212" stroke="#c8c8c8" stroke-width="1"/><path d="M971.5 193 V212" stroke="#c8c8c8" stroke-width="1"/><path d="M1046.5 193 V212" stroke="#c8c8c8" stroke-width="1"/><path d="M1121.5 193 V212" stroke="#c8c8c8" stroke-width="1"/><path d="M0 246.5 H29" stroke="#c8c8c8" stroke-width="1"/><path d="M0 280.86 H29" stroke="#c8c8c8" stroke-width="1"/><path d="M0 315.22 H29" stroke="#c8c8c8" stroke-width="1"/><path d="M0 349.58 H29" stroke="#c8c8c8" stroke-width="1"/><path d="M0 383.94 H29" stroke="#c8c8c8" stroke-width="1"/><path d="M0 418.3 H29" stroke="#c8c8c8" stroke-width="1"/><path d="M0 452.66 H29" stroke="#c8c8c8" stroke-width="1"/><path d="M0 487.02 H29" stroke="#c8c8c8" stroke-width="1"/><path d="M0 506.52 H29" stroke="#c8c8c8" stroke-width="1"/><path d="M0 526.02 H29" stroke="#c8c8c8" stroke-width="1"/><path d="M0 545.52 H29" stroke="#c8c8c8" stroke-width="1"/><path d="M0 565.02 H29" stroke="#c8c8c8" stroke-width="1"/><path d="M0 584.52 H29" stroke="#c8c8c8" stroke-width="1"/><path d="M0 212.500 H1181" stroke="#b4b4b4" stroke-width="1"/><path d="M29.500 193 V595.5" stroke="#b4b4b4" stroke-width="1"/><path d="M26.500 196 V209.500 H13 Z" fill="#b2b2b2"/></svg>
<div class="a t " style="left:56.5px;top:203.5px;font-size:14.5px;color:#333;font-weight:400;transform:translate(-50%,-50%);">A</div>
<div class="a t " style="left:144.0px;top:203.5px;font-size:14.5px;color:#333;font-weight:400;transform:translate(-50%,-50%);">B</div>
<div class="a t " style="left:264.5px;top:203.5px;font-size:14.5px;color:#333;font-weight:400;transform:translate(-50%,-50%);">C</div>
<div class="a t " style="left:385.5px;top:203.5px;font-size:14.5px;color:#333;font-weight:400;transform:translate(-50%,-50%);">D</div>
<div class="a t " style="left:483.5px;top:203.5px;font-size:14.5px;color:#333;font-weight:400;transform:translate(-50%,-50%);">E</div>
<div class="a t " style="left:558.5px;top:203.5px;font-size:14.5px;color:#333;font-weight:400;transform:translate(-50%,-50%);">F</div>
<div class="a t " style="left:633.5px;top:203.5px;font-size:14.5px;color:#333;font-weight:400;transform:translate(-50%,-50%);">G</div>
<div class="a t " style="left:708.5px;top:203.5px;font-size:14.5px;color:#333;font-weight:400;transform:translate(-50%,-50%);">H</div>
<div class="a t " style="left:783.5px;top:203.5px;font-size:14.5px;color:#333;font-weight:400;transform:translate(-50%,-50%);">I</div>
<div class="a t " style="left:858.5px;top:203.5px;font-size:14.5px;color:#333;font-weight:400;transform:translate(-50%,-50%);">J</div>
<div class="a t " style="left:933.5px;top:203.5px;font-size:14.5px;color:#333;font-weight:400;transform:translate(-50%,-50%);">K</div>
<div class="a t " style="left:1008.5px;top:203.5px;font-size:14.5px;color:#333;font-weight:400;transform:translate(-50%,-50%);">L</div>
<div class="a t " style="left:1083.5px;top:203.5px;font-size:14.5px;color:#333;font-weight:400;transform:translate(-50%,-50%);">M</div>
<div class="a t " style="left:1158.5px;top:203.5px;font-size:14.5px;color:#333;font-weight:400;transform:translate(-50%,-50%);">N</div>
<div class="a t " style="left:14.5px;top:237.5px;font-size:14.5px;color:#333;font-weight:400;transform:translate(-50%,-50%);">1</div>
<div class="a t " style="left:14.5px;top:271.86px;font-size:14.5px;color:#333;font-weight:400;transform:translate(-50%,-50%);">2</div>
<div class="a t " style="left:14.5px;top:306.22px;font-size:14.5px;color:#333;font-weight:400;transform:translate(-50%,-50%);">3</div>
<div class="a t " style="left:14.5px;top:340.58px;font-size:14.5px;color:#333;font-weight:400;transform:translate(-50%,-50%);">4</div>
<div class="a t " style="left:14.5px;top:374.94px;font-size:14.5px;color:#333;font-weight:400;transform:translate(-50%,-50%);">5</div>
<div class="a t " style="left:14.5px;top:409.3px;font-size:14.5px;color:#333;font-weight:400;transform:translate(-50%,-50%);">6</div>
<div class="a t " style="left:14.5px;top:443.66px;font-size:14.5px;color:#333;font-weight:400;transform:translate(-50%,-50%);">7</div>
<div class="a t " style="left:14.5px;top:478.02px;font-size:14.5px;color:#333;font-weight:400;transform:translate(-50%,-50%);">8</div>
<div class="a t " style="left:14.5px;top:496.77px;font-size:14.5px;color:#333;font-weight:400;transform:translate(-50%,-50%);">9</div>
<div class="a t " style="left:14.5px;top:516.27px;font-size:14.5px;color:#333;font-weight:400;transform:translate(-50%,-50%);">10</div>
<div class="a t " style="left:14.5px;top:535.77px;font-size:14.5px;color:#333;font-weight:400;transform:translate(-50%,-50%);">11</div>
<div class="a t " style="left:14.5px;top:555.27px;font-size:14.5px;color:#333;font-weight:400;transform:translate(-50%,-50%);">12</div>
<div class="a t " style="left:14.5px;top:574.77px;font-size:14.5px;color:#333;font-weight:400;transform:translate(-50%,-50%);">13</div>
<div class="a t " style="left:14.5px;top:594.27px;font-size:14.5px;color:#333;font-weight:400;transform:translate(-50%,-50%);">14</div>
<div class="a " style="left:30px;top:213px;width:491px;height:34px;background:#fff;"></div>
<div class="a " style="left:29px;top:246.0px;width:492px;height:34.860000000000014px;background:#e2efda;"></div>
<svg class="a" style="left:0px;top:0px;pointer-events:none;" width="1181" height="595.5" viewBox="0 0 1181 595.5"><path d="M84.5 246.0 V487.52" stroke="#3c3c3c" stroke-width="1"/><path d="M204.5 246.0 V487.52" stroke="#3c3c3c" stroke-width="1"/><path d="M325.5 246.0 V487.52" stroke="#3c3c3c" stroke-width="1"/><path d="M446.5 246.0 V487.52" stroke="#3c3c3c" stroke-width="1"/><path d="M521.5 212.5 V487.52" stroke="#3c3c3c" stroke-width="1"/><path d="M29 246.5 H521.500" stroke="#3c3c3c" stroke-width="1"/><path d="M29 280.86 H521.500" stroke="#3c3c3c" stroke-width="1"/><path d="M29 315.22 H521.500" stroke="#3c3c3c" stroke-width="1"/><path d="M29 349.58 H521.500" stroke="#3c3c3c" stroke-width="1"/><path d="M29 383.94 H521.500" stroke="#3c3c3c" stroke-width="1"/><path d="M29 418.3 H521.500" stroke="#3c3c3c" stroke-width="1"/><path d="M29 452.66 H521.500" stroke="#3c3c3c" stroke-width="1"/><path d="M29 487.02 H521.500" stroke="#3c3c3c" stroke-width="1"/></svg>
<div class="a t " style="left:196px;top:229.8px;font-size:14.5px;color:#222;font-weight:400;transform:translate(0,-50%);">EXCEL表格填充背景色</div>
<div class="a t " style="left:32.5px;top:265.6px;font-size:14.5px;color:#222;font-weight:400;transform:translate(0,-50%);">序号</div>
<div class="a t " style="left:87.5px;top:265.6px;font-size:14.5px;color:#222;font-weight:400;transform:translate(0,-50%);">姓名</div>
<div class="a t " style="left:207.5px;top:265.6px;font-size:14.5px;color:#222;font-weight:400;transform:translate(0,-50%);">性别</div>
<div class="a t " style="left:328.5px;top:265.6px;font-size:14.5px;color:#222;font-weight:400;transform:translate(0,-50%);">年龄</div>
<div class="a t " style="left:449.5px;top:265.6px;font-size:14.5px;color:#222;font-weight:400;transform:translate(0,-50%);">备注</div>
<div class="a " style="left:0px;top:595.5px;width:1200px;height:42.5px;background:#e6e6e6;"></div>
<div class="a " style="left:1181px;top:193px;width:19px;height:402.5px;background:#d5d5d5;"></div>
<div class="a " style="left:1183px;top:194px;width:14.5px;height:15.5px;background:#fff;border:1px solid #e4e4e4;"></div>
<svg class="a" style="left:1186.2px;top:198.3px;" width="8" height="6" viewBox="0 0 8 6"><path d="M0.300 5.200 L4 1 L7.700 5.200 Z" fill="#555"/></svg>
<div class="a " style="left:1183px;top:210.5px;width:14.5px;height:295.5px;background:#fff;border:1px solid #ececec;"></div>
<div class="a " style="left:1183px;top:582px;width:14.5px;height:13.5px;background:#fff;border:1px solid #e4e4e4;"></div>
<svg class="a" style="left:1186.2px;top:586.5px;" width="8" height="6" viewBox="0 0 8 6"><path d="M0.300 0.800 L4 5 L7.700 0.800 Z" fill="#555"/></svg>
<div class="a " style="left:0px;top:595.5px;width:1200px;height:1px;background:#b4b4b4;"></div>
<div class="a " style="left:0px;top:596.5px;width:1200px;height:21.5px;background:#e6e6e6;"></div>
<svg class="a" style="left:16px;top:602px;" width="6" height="9" viewBox="0 0 6 9"><path d="M5 0.500 L1 4.500 L5 8.500 Z" fill="#c4c4c4"/></svg>
<svg class="a" style="left:37px;top:602px;" width="6" height="9" viewBox="0 0 6 9"><path d="M1 0.500 L5 4.500 L1 8.500 Z" fill="#c4c4c4"/></svg>
<div class="a " style="left:72px;top:596px;width:58px;height:17.5px;background:#fff;"></div>
<div class="a " style="left:72px;top:613px;width:58px;height:1.6px;background:#217346;"></div>
<div class="a t " style="left:100.3px;top:604.5px;font-size:12.6px;color:#217346;font-weight:400;transform:translate(-50%,-50%);">Sheet1</div>
<svg class="a" style="left:153.6px;top:599.6px;" width="14" height="14" viewBox="0 0 14 14"><circle cx="7" cy="7" r="6.300" fill="none" stroke="#666" stroke-width="1"/><path d="M7 3.800 V10.200 M3.800 7 H10.200" stroke="#666" stroke-width="1"/></svg>
<div class="a " style="left:717px;top:601.7px;width:1.7px;height:1.7px;background:#8a8a8a;"></div>
<div class="a " style="left:717px;top:605.5px;width:1.7px;height:1.7px;background:#8a8a8a;"></div>
<div class="a " style="left:717px;top:609.2px;width:1.7px;height:1.7px;background:#8a8a8a;"></div>
<div class="a " style="left:729px;top:597px;width:453px;height:19px;background:#d2d2d2;"></div>
<div class="a " style="left:730px;top:599px;width:14.5px;height:15px;background:#fff;"></div>
<svg class="a" style="left:733.5px;top:602.5px;" width="6" height="8" viewBox="0 0 6 8"><path d="M5.200 0.300 L1 4 L5.200 7.700 Z" fill="#555"/></svg>
<div class="a " style="left:746px;top:599px;width:387.3px;height:15px;background:#fff;"></div>
<div class="a " style="left:1166.5px;top:599px;width:14.7px;height:15px;background:#fff;"></div>
<svg class="a" style="left:1171px;top:602.5px;" width="6" height="8" viewBox="0 0 6 8"><path d="M0.800 0.300 L5 4 L0.800 7.700 Z" fill="#555"/></svg>
<div class="a " style="left:0px;top:617px;width:1200px;height:21px;background:#f3f2f1;"></div>
<div class="a " style="left:0px;top:617px;width:1200px;height:1px;background:#dadada;"></div>
<div class="a t " style="left:6px;top:628px;font-size:11.5px;color:#444;font-weight:400;transform:translate(0,-50%);">就绪</div>
<div class="a t " style="left:865px;top:628px;font-size:11.7px;color:#444;font-weight:400;transform:translate(0,-50%);">计数: 5</div>
<div class="a " style="left:916px;top:618.5px;width:36px;height:19.5px;background:#cfcdcb;"></div>
<svg class="a" style="left:927px;top:621px;" width="13" height="13" viewBox="0 0 13 13"><rect x="0.600" y="0.600" width="11.800" height="11.800" fill="none" stroke="#333" stroke-width="1.100"/><path d="M4.500 0.600 V12.400 M8.500 0.600 V12.400 M0.600 4.500 H12.400 M0.600 8.500 H12.400" stroke="#333" stroke-width="1"/></svg>
<svg class="a" style="left:966px;top:621px;" width="13" height="13" viewBox="0 0 13 13"><rect x="0.600" y="0.600" width="11.800" height="11.800" fill="none" stroke="#444" stroke-width="1.100"/><rect x="3.300" y="3.300" width="6.400" height="6.400" fill="none" stroke="#444" stroke-width="1"/><path d="M4.800 5.500 H8.200 M4.800 7.500 H8.200" stroke="#444" stroke-width="0.800"/></svg>
<svg class="a" style="left:1002px;top:621px;" width="14" height="13" viewBox="0 0 14 13"><rect x="0.600" y="0.600" width="12.800" height="11.800" fill="none" stroke="#444" stroke-width="1.100"/><path d="M4.500 0.600 V7 H9.500 V0.600" fill="none" stroke="#444" stroke-width="1"/></svg>
<div class="a t " style="left:1037.5px;top:627.5px;font-size:13px;color:#666;font-weight:400;transform:translate(-50%,-50%);">−</div>
<div class="a " style="left:1047px;top:627.5px;width:90px;height:1px;background:#a0a0a0;"></div>
<div class="a " style="left:1090px;top:620.5px;width:4px;height:14px;background:#555;"></div>
<div class="a t " style="left:1147px;top:627.5px;font-size:13px;color:#666;font-weight:400;transform:translate(-50%,-50%);">+</div>
<div class="a t " style="left:1193px;top:628px;font-size:12px;color:#444;font-weight:400;transform:translate(-100%,-50%);">100%</div>
<div class="a " style="left:0px;top:637px;width:1200px;height:1px;background:#6a6a6a;"></div>
<div class="a " style="left:218px;top:124px;width:164px;height:236.5px;background:#fff;box-shadow:0 1px 5px rgba(0,0,0,0.28),0 0 1px rgba(0,0,0,0.25);border-radius:1px;"></div>
<div class="a t " style="left:230px;top:139.3px;font-size:11.4px;color:#222;font-weight:700;transform:translate(0,-50%);">主题颜色</div>
<div class="a " style="left:221.3px;top:154.3px;width:11.3px;height:11.2px;background:#FFFFFF;border:1px solid #e3e3e3;"></div>
<div class="a " style="left:221.3px;top:178.8px;width:11.3px;height:12.3px;background:#F2F2F2;"></div>
<div class="a " style="left:221.3px;top:191.05px;width:11.3px;height:12.3px;background:#D9D9D9;"></div>
<div class="a " style="left:221.3px;top:203.3px;width:11.3px;height:12.3px;background:#BFBFBF;"></div>
<div class="a " style="left:221.3px;top:215.55px;width:11.3px;height:12.3px;background:#A6A6A6;"></div>
<div class="a " style="left:221.3px;top:227.8px;width:11.3px;height:12.3px;background:#808080;"></div>
<div class="a " style="left:237.57px;top:154.3px;width:11.3px;height:11.2px;background:#000000;"></div>
<div class="a " style="left:237.57px;top:178.8px;width:11.3px;height:12.3px;background:#808080;"></div>
<div class="a " style="left:237.57px;top:191.05px;width:11.3px;height:12.3px;background:#595959;"></div>
<div class="a " style="left:237.57px;top:203.3px;width:11.3px;height:12.3px;background:#404040;"></div>
<div class="a " style="left:237.57px;top:215.55px;width:11.3px;height:12.3px;background:#262626;"></div>
<div class="a " style="left:237.57px;top:227.8px;width:11.3px;height:12.3px;background:#0D0D0D;"></div>
<div class="a " style="left:253.84px;top:154.3px;width:11.3px;height:11.2px;background:#E7E6E6;"></div>
<div class="a " style="left:253.84px;top:178.8px;width:11.3px;height:12.3px;background:#D0CECE;"></div>
<div class="a " style="left:253.84px;top:191.05px;width:11.3px;height:12.3px;background:#AEAAAA;"></div>
<div class="a " style="left:253.84px;top:203.3px;width:11.3px;height:12.3px;background:#757171;"></div>
<div class="a " style="left:253.84px;top:215.55px;width:11.3px;height:12.3px;background:#3A3838;"></div>
<div class="a " style="left:253.84px;top:227.8px;width:11.3px;height:12.3px;background:#161616;"></div>
<div class="a " style="left:270.11px;top:154.3px;width:11.3px;height:11.2px;background:#44546A;"></div>
<div class="a " style="left:270.11px;top:178.8px;width:11.3px;height:12.3px;background:#D6DCE4;"></div>
<div class="a " style="left:270.11px;top:191.05px;width:11.3px;height:12.3px;background:#ACB9CA;"></div>
<div class="a " style="left:270.11px;top:203.3px;width:11.3px;height:12.3px;background:#8497B0;"></div>
<div class="a " style="left:270.11px;top:215.55px;width:11.3px;height:12.3px;background:#333F4F;"></div>
<div class="a " style="left:270.11px;top:227.8px;width:11.3px;height:12.3px;background:#222B35;"></div>
<div class="a " style="left:286.38px;top:154.3px;width:11.3px;height:11.2px;background:#4472C4;"></div>
<div class="a " style="left:286.38px;top:178.8px;width:11.3px;height:12.3px;background:#D9E1F2;"></div>
<div class="a " style="left:286.38px;top:191.05px;width:11.3px;height:12.3px;background:#B4C6E7;"></div>
<div class="a " style="left:286.38px;top:203.3px;width:11.3px;height:12.3px;background:#8EA9DB;"></div>
<div class="a " style="left:286.38px;top:215.55px;width:11.3px;height:12.3px;background:#305496;"></div>
<div class="a " style="left:286.38px;top:227.8px;width:11.3px;height:12.3px;background:#203764;"></div>
<div class="a " style="left:302.65px;top:154.3px;width:11.3px;height:11.2px;background:#ED7D31;"></div>
<div class="a " style="left:302.65px;top:178.8px;width:11.3px;height:12.3px;background:#FCE4D6;"></div>
<div class="a " style="left:302.65px;top:191.05px;width:11.3px;height:12.3px;background:#F8CBAD;"></div>
<div class="a " style="left:302.65px;top:203.3px;width:11.3px;height:12.3px;background:#F4B084;"></div>
<div class="a " style="left:302.65px;top:215.55px;width:11.3px;height:12.3px;background:#C65911;"></div>
<div class="a " style="left:302.65px;top:227.8px;width:11.3px;height:12.3px;background:#833C0C;"></div>
<div class="a " style="left:318.92px;top:154.3px;width:11.3px;height:11.2px;background:#A5A5A5;"></div>
<div class="a " style="left:318.92px;top:178.8px;width:11.3px;height:12.3px;background:#EDEDED;"></div>
<div class="a " style="left:318.92px;top:191.05px;width:11.3px;height:12.3px;background:#DBDBDB;"></div>
<div class="a " style="left:318.92px;top:203.3px;width:11.3px;height:12.3px;background:#C9C9C9;"></div>
<div class="a " style="left:318.92px;top:215.55px;width:11.3px;height:12.3px;background:#7B7B7B;"></div>
<div class="a " style="left:318.92px;top:227.8px;width:11.3px;height:12.3px;background:#525252;"></div>
<div class="a " style="left:335.19px;top:154.3px;width:11.3px;height:11.2px;background:#FFC000;"></div>
<div class="a " style="left:335.19px;top:178.8px;width:11.3px;height:12.3px;background:#FFF2CC;"></div>
<div class="a " style="left:335.19px;top:191.05px;width:11.3px;height:12.3px;background:#FFE699;"></div>
<div class="a " style="left:335.19px;top:203.3px;width:11.3px;height:12.3px;background:#FFD966;"></div>
<div class="a " style="left:335.19px;top:215.55px;width:11.3px;height:12.3px;background:#BF8F00;"></div>
<div class="a " style="left:335.19px;top:227.8px;width:11.3px;height:12.3px;background:#806000;"></div>
<div class="a " style="left:351.46px;top:154.3px;width:11.3px;height:11.2px;background:#5B9BD5;"></div>
<div class="a " style="left:351.46px;top:178.8px;width:11.3px;height:12.3px;background:#DDEBF7;"></div>
<div class="a " style="left:351.46px;top:191.05px;width:11.3px;height:12.3px;background:#BDD7EE;"></div>
<div class="a " style="left:351.46px;top:203.3px;width:11.3px;height:12.3px;background:#9BC2E6;"></div>
<div class="a " style="left:351.46px;top:215.55px;width:11.3px;height:12.3px;background:#2F75B5;"></div>
<div class="a " style="left:351.46px;top:227.8px;width:11.3px;height:12.3px;background:#1F4E78;"></div>
<div class="a " style="left:367.73px;top:154.3px;width:11.3px;height:11.2px;background:#70AD47;"></div>
<div class="a " style="left:367.73px;top:178.8px;width:11.3px;height:12.3px;background:#E2EFDA;"></div>
<div class="a " style="left:367.73px;top:191.05px;width:11.3px;height:12.3px;background:#C6E0B4;"></div>
<div class="a " style="left:367.73px;top:203.3px;width:11.3px;height:12.3px;background:#A9D08E;"></div>
<div class="a " style="left:367.73px;top:215.55px;width:11.3px;height:12.3px;background:#548235;"></div>
<div class="a " style="left:367.73px;top:227.8px;width:11.3px;height:12.3px;background:#375623;"></div>
<div class="a " style="left:367.23px;top:178.3px;width:12.3px;height:12.8px;border:1px solid #f0a45a;"></div>
<div class="a " style="left:219px;top:251px;width:162px;height:1px;background:#e6e6e6;"></div>
<div class="a t " style="left:230px;top:267.3px;font-size:11.4px;color:#222;font-weight:700;transform:translate(0,-50%);">标准色</div>
<div class="a " style="left:221.3px;top:282.2px;width:11.3px;height:11.3px;background:#C00000;"></div>
<div class="a " style="left:237.57px;top:282.2px;width:11.3px;height:11.3px;background:#FF0000;"></div>
<div class="a " style="left:253.84px;top:282.2px;width:11.3px;height:11.3px;background:#FFC000;"></div>
<div class="a " style="left:270.11px;top:282.2px;width:11.3px;height:11.3px;background:#FFFF00;"></div>
<div class="a " style="left:286.38px;top:282.2px;width:11.3px;height:11.3px;background:#92D050;"></div>
<div class="a " style="left:302.65px;top:282.2px;width:11.3px;height:11.3px;background:#00B050;"></div>
<div class="a " style="left:318.92px;top:282.2px;width:11.3px;height:11.3px;background:#00B0F0;"></div>
<div class="a " style="left:335.19px;top:282.2px;width:11.3px;height:11.3px;background:#0070C0;"></div>
<div class="a " style="left:351.46px;top:282.2px;width:11.3px;height:11.3px;background:#002060;"></div>
<div class="a " style="left:367.73px;top:282.2px;width:11.3px;height:11.3px;background:#7030A0;"></div>
<div class="a " style="left:219px;top:303px;width:162px;height:1px;background:#e6e6e6;"></div>
<div class="a " style="left:228px;top:309.5px;width:18.5px;height:18.5px;background:#c6c6c6;border:1px solid #adadad;box-shadow:inset 0 0 0 1px #d9d9d9;"></div>
<div class="a t " style="left:253px;top:319.5px;font-size:11.4px;color:#777;font-weight:400;transform:translate(0,-50%);">无填充(<span style="text-decoration:underline">N</span>)</div>
<div class="a " style="left:219px;top:333px;width:162px;height:1px;background:#e6e6e6;"></div>
<svg class="a" style="left:229.5px;top:339.5px;" width="16" height="15" viewBox="0 0 16 15">
<path d="M8.300 1 C3.800 1 0.800 4 0.800 7.600 C0.800 10.600 3 12.400 5 11.600 C6.500 11 7.300 11.600 7.300 12.800 C7.300 14 8.300 14.400 9.500 14.200 C13 13.500 15.200 10.800 15.200 7.400 C15.200 3.600 12.300 1 8.300 1 Z" fill="none" stroke="#444" stroke-width="1.100"/>
<circle cx="4.500" cy="6.800" r="1" fill="#e8394a"/><circle cx="7.300" cy="4.200" r="1" fill="#2f7fd1"/><circle cx="10.800" cy="5" r="1" fill="#3aa757"/><circle cx="12" cy="8.500" r="1" fill="#e8a33d"/></svg>
<div class="a t " style="left:253px;top:347.5px;font-size:11.4px;color:#333;font-weight:400;transform:translate(0,-50%);">其他颜色(<span style="text-decoration:underline">M</span>)...</div>
<svg class="a" style="left:0px;top:0px;pointer-events:none;" width="1200" height="638" viewBox="0 0 1200 638"><rect x="140.05" y="45.85" width="448.3" height="254.8" fill="none" stroke="#e93a3c" stroke-width="4.3"/></svg>
</div></body></html>
